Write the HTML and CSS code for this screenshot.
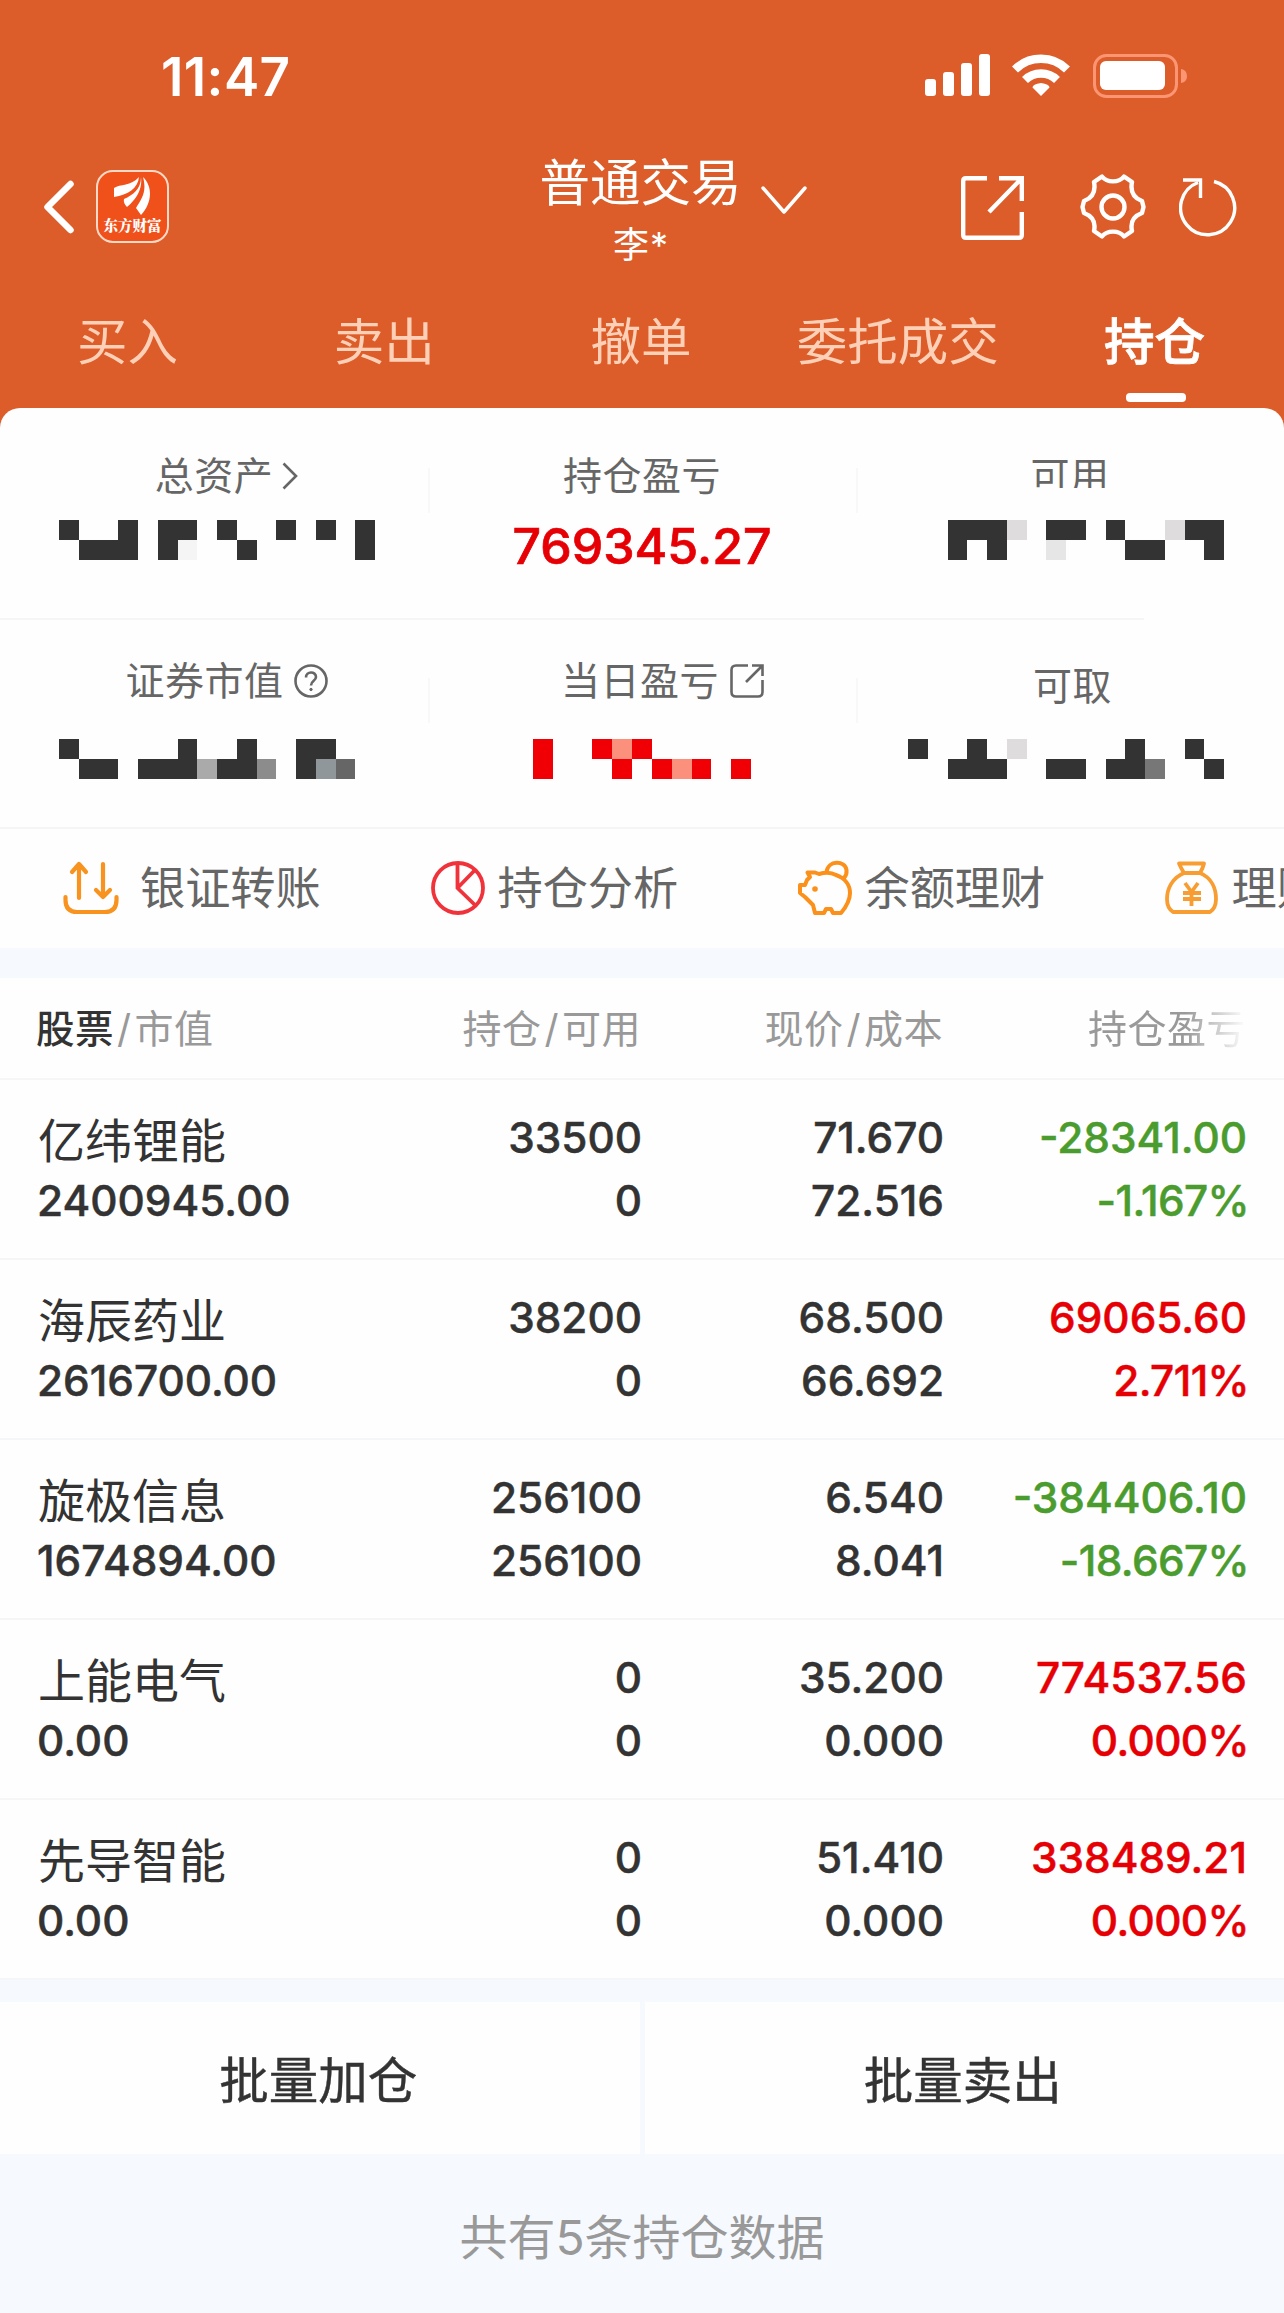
FILE: index.html
```html
<!DOCTYPE html>
<html lang="zh-CN">
<head>
    <meta charset="UTF-8">
    <meta name="viewport" content="width=device-width, initial-scale=1.0">
    <title>普通交易</title>
    <link rel="stylesheet" href="styles.css">
</head>
<body>
    <header class="header">
        <div class="status-bar">
            <span class="time">11:47</span>
            <div class="status-icons">
                <svg width="66" height="42" viewBox="0 0 66 42" fill="#fff">
                    <rect x="0" y="25" width="11" height="17" rx="3"/>
                    <rect x="18" y="18" width="11" height="24" rx="3"/>
                    <rect x="36" y="9" width="11" height="33" rx="3"/>
                    <rect x="54" y="0" width="11" height="42" rx="3"/>
                </svg>
                <svg class="wifi" width="58" height="42" viewBox="0 0 58 42">
                    <g fill="none" stroke="#fff" stroke-width="8.5">
                        <path d="M3 15.5A37 37 0 0 1 55 15.5"/>
                        <path d="M13 26A23 23 0 0 1 45 26"/>
                    </g>
                    <path d="M29 42L20.500 33.500Q20.500 30 29 29Q37.500 30 37.500 33.500Z" fill="#fff"/>
                </svg>
                <svg width="94" height="44" viewBox="0 0 94 44">
                    <rect x="1.500" y="1.500" width="82" height="41" rx="12" fill="none" stroke="#fb9573" stroke-width="3"/>
                    <rect x="7" y="7" width="65" height="29" rx="6" fill="#fff"/>
                    <path d="M88 15Q94 16 94 22T88 29Z" fill="#fb9573"/>
                </svg>
            </div>
        </div>

        <div class="nav">
            <div class="nav-left">
                <svg width="32" height="56" viewBox="0 0 32 56" fill="none" stroke="#fff" stroke-width="6.500" stroke-linecap="round" stroke-linejoin="round">
                    <path d="M27.500 5L4.500 28L27.500 51"/>
                </svg>
                <div class="logo">
                    <svg width="40" height="40" viewBox="0 0 40 40" fill="#fff">
                        <path d="M1 12C7 8 18 10 26 1C25 12 15 19 1 21Z"/>
                        <path d="M28 1C30 16 20 26 14 31Q10 27 11 23C20 19 28 13 28 1Z"/>
                        <path d="M30 1C41 12 38 28 28 39L23 32C29 22 34 16 30 1Z"/>
                    </svg>
                    <span>东方财富</span>
                </div>
            </div>
            <div class="nav-title">
                <div class="title">普通交易</div>
                <div class="account">李<span>*</span></div>
            </div>
            <div class="nav-right">
                <svg class="drop" width="46" height="30" viewBox="0 0 46 30" fill="none" stroke="#fff" stroke-width="3.500" stroke-linecap="round" stroke-linejoin="round">
                    <path d="M2 2L23 26L44 2"/>
                </svg>
                <svg class="open" width="64" height="64" viewBox="0 0 64 64" fill="none" stroke="#fff" stroke-width="4.400">
                    <path d="M26 2.200H5Q2.200 2.200 2.200 5V59Q2.200 61.800 5 61.800H58Q60.800 61.800 60.800 59V36"/>
                    <path d="M38 2.200H60.800V25M60 3L28 36"/>
                </svg>
                <svg class="gear" width="66" height="66" viewBox="0 0 66 66" fill="none" stroke="#fff" stroke-width="4.400" stroke-linejoin="round">
                    <path d="M22 2.500C27 9 39 9 44 2.500L52 8C50 18 54 24 62 27L63.500 33L62 39C54 42 50 48 52 57L44 62.500C39 56 27 56 22 62.500L14 57C16 48 12 42 4 39L2.500 33L4 27C12 24 16 18 14 8Z"/>
                    <circle cx="33" cy="33" r="11.500"/>
                </svg>
                <svg width="58" height="60" viewBox="0 0 58 60" fill="none" stroke="#fff" stroke-width="3.400">
                    <path d="M35 4.500A27 27 0 1 1 19 5.500"/>
                    <path d="M4 3H21.500V21"/>
                </svg>
            </div>
        </div>

        <nav class="tabs">
            <a class="tab">买入</a>
            <a class="tab">卖出</a>
            <a class="tab">撤单</a>
            <a class="tab">委托成交</a>
            <a class="tab active">持仓</a>
        </nav>
    </header>

    <section class="summary">
        <div class="summary-row">
            <div class="cell">
                <div class="label assets">总资产<svg class="more" width="16" height="28" viewBox="0 0 16 28" fill="none" stroke="#666" stroke-width="2.600"><path d="M1.500 1.500L14 14L1.500 26.500"/></svg></div>
                <svg class="mosaic left" viewBox="0 0 16 2" preserveAspectRatio="none" fill="#333">
                    <path d="M0 0h1v1h-1zM1 1h2v-1h1v2h-3zM5 0h2v1h-1v1h-1zM8 0h1v1h-1zM9 1h1v1h-1zM11 0h1v1h-1zM13 0h1v1h-1zM15 0h1v2h-1z"/>
                    <path fill="#f5f5f5" d="M6 1h1v1h-1z"/>
                </svg>
            </div>
            <div class="cell">
                <div class="label">持仓盈亏</div>
                <div class="value red">769345.27</div>
            </div>
            <div class="cell">
                <div class="label cut">可用</div>
                <svg class="mosaic right" viewBox="0 0 16 2" preserveAspectRatio="none" fill="#333">
                    <path d="M2 0h3v2h-1v-1h-1v1h-1zM7 0h2v1h-2zM10 0h1v1h-1zM11 1h2v1h-2zM14 0h2v2h-1v-1h-1z"/>
                    <path fill="#dedcdd" d="M5 0h1v1h-1zM13 0h1v1h-1z"/>
                    <path fill="#e6e6e6" d="M7 1h1v1h-1z"/>
                </svg>
            </div>
        </div>
        <div class="summary-row second">
            <div class="cell">
                <div class="label assets">证券市值<svg class="help" width="34" height="34" viewBox="0 0 34 34" fill="none" stroke="#666" stroke-width="2.600"><circle cx="17" cy="17" r="15.500"/><path d="M12 13.500C12 7 22 7 22 13C22 17 17 16.500 17 21.500"/><circle cx="17" cy="25.500" r="1.200" fill="#666" stroke-width="1"/></svg></div>
                <svg class="mosaic left" viewBox="0 0 16 2" preserveAspectRatio="none" fill="#333">
                    <path d="M0 0h1v1h-1zM1 1h2v1h-2zM4 1h2v-1h1v2h-3zM8 1h1v-1h1v2h-2zM12 0h2v1h-1v1h-1z"/>
                    <path fill="#aaa" d="M7 1h1v1h-1z"/>
                    <path fill="#8c8c8c" d="M10 1h1v1h-1z"/>
                    <path fill="#90979a" d="M13 1h1v1h-1z"/>
                    <path fill="#666" d="M14 1h1v1h-1z"/>
                </svg>
            </div>
            <div class="cell">
                <div class="label today">当日盈亏<svg class="jump" width="34" height="34" viewBox="0 0 34 34" fill="none" stroke="#666" stroke-width="2.600"><path d="M18 1.500H6Q1.500 1.500 1.500 6V28Q1.500 32.500 6 32.500H28Q32.500 32.500 32.500 28V16"/><path d="M22 1.500H32.500V12M32 2L16 18"/></svg></div>
                <svg class="mosaic center" viewBox="0 0 11 2" preserveAspectRatio="none" fill="#f00005">
                    <path d="M0 0h1v2h-1zM3 0h1v1h-1zM4 1h1v1h-1zM5 0h1v1h-1zM6 1h1v1h-1zM8 1h1v1h-1zM10 1h1v1h-1z"/>
                    <path fill="#fb907c" d="M4 0h1v1h-1zM7 1h1v1h-1z"/>
                </svg>
            </div>
            <div class="cell">
                <div class="label low">可取</div>
                <svg class="mosaic right" viewBox="0 0 16 2" preserveAspectRatio="none" fill="#333">
                    <path d="M0 0h1v1h-1zM2 1h1v-1h1v1h1v1h-3zM7 1h2v1h-2zM10 1h1v-1h1v2h-2zM14 0h1v1h-1zM15 1h1v1h-1z"/>
                    <path fill="#dedcdd" d="M5 0h1v1h-1z"/>
                    <path fill="#777" d="M12 1h1v1h-1z"/>
                </svg>
            </div>
        </div>
    </section>

    <section class="shortcuts">
        <div class="shortcut transfer">
            <svg width="56" height="56" viewBox="0 0 56 56" fill="none" stroke="#f7931e" stroke-width="4.200" stroke-linecap="round" stroke-linejoin="round">
                <path d="M16 38V4M9 12L16 4L23 12"/>
                <path d="M40 4V37M33 30L40 37L47 30"/>
                <path d="M2.500 37V40Q2.500 52 14 52H42Q53.500 52 53.500 40V37"/>
            </svg>
            <span>银证转账</span>
        </div>
        <div class="shortcut">
            <svg width="56" height="56" viewBox="0 0 56 56" fill="none" stroke="#f0333a" stroke-width="3.800">
                <circle cx="28" cy="28" r="25"/>
                <path d="M27.500 3V28L46 46M27.500 28L45 10"/>
            </svg>
            <span>持仓分析</span>
        </div>
        <div class="shortcut">
            <svg width="56" height="56" viewBox="0 0 56 56" fill="none" stroke="#fb901a" stroke-width="4" stroke-linejoin="round">
                <path d="M10.500 12.500H18L22 14Q32 11 39 15C48 18 53 25 53 33C53 41 49 47 44 53H36L34 49H29L27 53H18L16 45L8 37L3 33V25H8L10 20L13 17Z"/>
                <path d="M29.500 12C31 0 48 0 49.500 10Q50 15 47 18"/>
                <circle cx="18" cy="29" r="2.800" fill="#fb901a" stroke="none"/>
            </svg>
            <span>余额理财</span>
        </div>
        <div class="shortcut">
            <svg width="56" height="56" viewBox="0 0 56 56" fill="none" stroke="#f89d32" stroke-width="3.800" stroke-linejoin="round">
                <path d="M15 3.500H40Q39 8 36 13H20Q17 8 15 3.500Z"/>
                <path d="M20 13C8 18 3 29 3 39Q3 48 9 52H46Q52 48 52 39C52 29 48 18 36 13"/>
                <path d="M21 23L27.500 32L34 23M27.500 32V46M19 33H37M19 39H37"/>
            </svg>
            <span>理财</span>
        </div>
    </section>

    <section class="holdings">
        <div class="row head">
            <div><b>股票</b><i>/</i>市值</div>
            <div>持仓<i>/</i>可用</div>
            <div>现价<i>/</i>成本</div>
            <div class="fade">持仓盈亏</div>
        </div>
        <div class="row">
            <div><span class="name">亿纬锂能</span><span>2400945.00</span></div>
            <div><span>33500</span><span>0</span></div>
            <div><span>71.670</span><span>72.516</span></div>
            <div class="green"><span>-28341.00</span><span class="rate">-1.167%</span></div>
        </div>
        <div class="row">
            <div><span class="name">海辰药业</span><span>2616700.00</span></div>
            <div><span>38200</span><span>0</span></div>
            <div><span>68.500</span><span>66.692</span></div>
            <div class="red"><span>69065.60</span><span class="rate">2.711%</span></div>
        </div>
        <div class="row">
            <div><span class="name">旋极信息</span><span>1674894.00</span></div>
            <div><span>256100</span><span>256100</span></div>
            <div><span>6.540</span><span>8.041</span></div>
            <div class="green"><span>-384406.10</span><span class="rate">-18.667%</span></div>
        </div>
        <div class="row">
            <div><span class="name">上能电气</span><span>0.00</span></div>
            <div><span>0</span><span>0</span></div>
            <div><span>35.200</span><span>0.000</span></div>
            <div class="red"><span>774537.56</span><span class="rate">0.000%</span></div>
        </div>
        <div class="row">
            <div><span class="name">先导智能</span><span>0.00</span></div>
            <div><span>0</span><span>0</span></div>
            <div><span>51.410</span><span>0.000</span></div>
            <div class="red"><span>338489.21</span><span class="rate">0.000%</span></div>
        </div>
    </section>

    <div class="batch">
        <button>批量加仓</button>
        <button>批量卖出</button>
    </div>
    <footer class="footer">共有5条持仓数据</footer>
</body>
</html>
```
FILE: styles.css
```css
* {
    box-sizing: border-box;
}
body, html {
    margin: 0;
    padding: 0;
}
body {
    width: 1284px;
    height: 2313px;
    overflow: hidden;
    background-color: #f6faff;
    font-family: Inter, "Noto Sans CJK SC", sans-serif;
    color: #333;
}
svg {
    display: block;
    flex: none;
}

/* header */
.header {
    height: 428px;
    background-color: #dc5d29;
    color: #fff;
}
.status-bar {
    height: 150px;
    padding: 51px 97px 0 161px;
    display: flex;
    justify-content: space-between;
}
.time {
    font-size: 53px;
    font-weight: 600;
    line-height: 52px;
    letter-spacing: 0.4px;
}
.status-icons {
    display: flex;
    padding-top: 3px;
}
.wifi {
    margin: 0 23px 0 21px;
}
.nav {
    height: 140px;
    display: grid;
    grid-template-columns: 1fr 204px 1fr;
    padding-right: 3px;
}
.nav-left {
    display: flex;
    align-items: flex-start;
    padding: 20px 0 0 43px;
}
.nav-left > svg {
    margin-top: 9px;
}
.logo {
    width: 73px;
    height: 73px;
    margin-left: 21px;
    border: 2px solid #ffd9c8;
    border-radius: 17px;
    background-color: #f05019;
    display: flex;
    flex-direction: column;
    align-items: center;
    padding-top: 4px;
}
.logo span {
    font-family: "Noto Serif CJK SC", "Noto Sans CJK SC", serif;
    font-size: 14.5px;
    font-weight: 900;
    line-height: 18px;
    white-space: nowrap;
}
.nav-title {
    text-align: center;
    white-space: nowrap;
}
.title {
    font-size: 50.5px;
    line-height: 64px;
    padding-top: 1px;
}
.account {
    font-size: 36px;
    line-height: 60px;
}
.account span {
    margin-left: 1px;
}
.nav-right {
    display: flex;
    align-items: flex-start;
    padding-top: 25px;
}
.drop {
    margin: 11px 0 0 18px;
}
.open {
    margin: 1px 0 0 154px;
}
.gear {
    margin: -1px 33px 0 55px;
}
.nav-right svg:last-child {
    margin-top: 2px;
}
.tabs {
    display: flex;
    height: 118px;
    padding-top: 2px;
}
.tab {
    flex: 1;
    display: flex;
    flex-direction: column;
    align-items: center;
    font-size: 50.5px;
    line-height: 100px;
    color: #ffd0b8;
    white-space: nowrap;
    margin-left: -1px;
    margin-right: 1px;
}
.tab.active {
    color: #fff;
    font-weight: 500;
    -webkit-text-stroke: 0.8px currentColor;
}
.tab.active::after {
    content: "";
    width: 60px;
    height: 9px;
    margin-top: 1px;
    margin-left: 3px;
    border-radius: 4px;
    background-color: #fff;
}

/* assets */
.summary {
    margin-top: -20px;
    background-color: #fefefe;
    border-radius: 20px 20px 0 0;
    border-bottom: 2px solid #f4f5f7;
    height: 421px;
}
.summary-row {
    display: flex;
    height: 210px;
    position: relative;
}
.summary-row.second {
    height: 209px;
}
/* divider stops short under the last column */
.summary-row:first-child::after {
    content: "";
    position: absolute;
    left: 0;
    bottom: -2px;
    width: 1144px;
    height: 2px;
    background-color: #f5f6f8;
}
.cell {
    flex: 1;
    position: relative;
    padding-top: 38px;
}
.cell + .cell::before {
    content: "";
    position: absolute;
    left: 0;
    top: 60px;
    width: 2px;
    height: 45px;
    background-color: #f7f8fa;
}
.label {
    display: flex;
    justify-content: center;
    align-items: center;
    height: 60px;
    font-size: 39px;
    letter-spacing: 0.5px;
    line-height: 60px;
    color: #666;
}
.assets {
    padding-left: 25px;
}
.more {
    margin-left: 9px;
}
.help {
    margin-left: 10px;
}
.second .cell {
    padding-top: 33px;
}
.today {
    padding-left: 41px;
}
.jump {
    margin-left: 11px;
}
.cut {
    clip-path: inset(0 0 18px 0);
}
.low {
    padding: 10px 0 0 5px;
}
.value {
    text-align: center;
    font-size: 50px;
    line-height: 60px;
    font-weight: 500;
    -webkit-text-stroke: 0.7px currentColor;
    margin-top: 10px;
}
.mosaic {
    width: 316px;
    height: 40px;
    shape-rendering: crispEdges;
}
.mosaic.left {
    margin-left: 59px;
}
.mosaic.right {
    margin-left: 52px;
}
.mosaic.center {
    width: 218px;
    margin-left: 105px;
}
.summary-row .mosaic {
    margin-top: 14px;
}
.second .mosaic {
    margin-top: 28px;
}

/* shortcuts */
.shortcuts {
    display: flex;
    height: 119px;
    background-color: #fefefe;
    overflow: hidden;
    padding-left: 63px;
}
.shortcut {
    flex: none;
    width: 367px;
    display: flex;
    align-items: flex-start;
    padding-top: 31px;
    font-size: 45.2px;
    line-height: 58px;
    color: #666;
    white-space: nowrap;
}
.shortcut span {
    margin-left: 11.5px;
}
.transfer span {
    margin-left: 21px;
}

/* holdings */
.holdings {
    margin-top: 30px;
    background-color: #fefefe;
}
.row {
    display: grid;
    grid-template-columns: 304px 301px 302px 303px;
    height: 180px;
    padding: 26px 37px 0 37px;
    border-bottom: 2px solid #f5f6f8;
    font-size: 42.3px;
    font-weight: 500;
    -webkit-text-stroke: 0.5px currentColor;
    line-height: 63px;
    white-space: nowrap;
}
.row div {
    text-align: right;
}
.row div:first-child {
    text-align: left;
}
.row span {
    display: block;
}
.row .name {
    position: relative;
    top: 3px;
    font-size: 47px;
    font-weight: 400;
    -webkit-text-stroke: 0;
    padding-left: 1px;
}
.row .rate {
    letter-spacing: -0.6px;
    margin-right: -2px;
}
.row.head {
    height: 102px;
    padding: 19px 37px 0 36px;
    font-size: 39px;
    font-weight: 400;
    -webkit-text-stroke: 0;
    letter-spacing: 0.5px;
    color: #999;
}
.head b {
    font-size: 38.5px;
    font-weight: 500;
    color: #333;
}
.head i {
    font-style: normal;
    margin: 0 3px;
}
.head .fade {
    -webkit-mask-image: linear-gradient(to right, #000 80%, transparent 100%);
    mask-image: linear-gradient(to right, #000 80%, transparent 100%);
}
.red, .cell .red {
    color: #e60005;
}
.green {
    color: #4b9c2e;
}

/* bottom */
.batch {
    display: flex;
    gap: 5px;
    margin-top: 22px;
}
.batch button {
    flex: 1;
    height: 152px;
    border: none;
    padding: 0 3px 1px 0;
    background-color: #fefefe;
    color: #333;
    font-family: inherit;
    font-size: 49.5px;
    -webkit-text-stroke: 0.4px currentColor;
}
.footer {
    text-align: center;
    font-size: 48px;
    line-height: 70px;
    padding-top: 49px;
    color: #999;
}
```
